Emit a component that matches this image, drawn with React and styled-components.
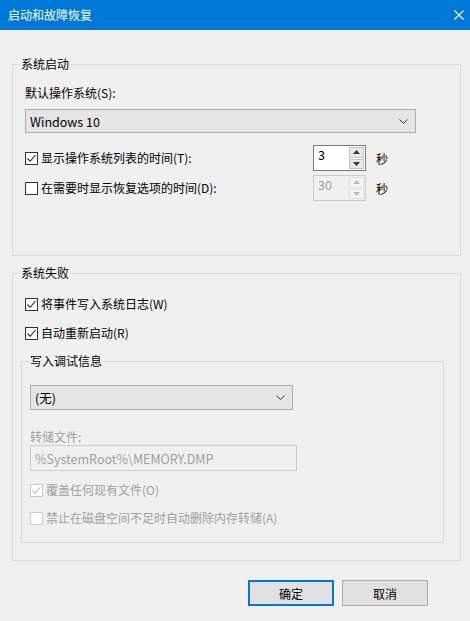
import React from 'react'
import styled, { createGlobalStyle } from 'styled-components'

const GlobalStyle = createGlobalStyle`
  html, body {
    margin: 0;
    padding: 0;
    background: #f0f0f0;
  }
  body {
    font-family: "Noto Sans CJK SC", "Noto Sans", sans-serif;
    font-size: 12px;
    color: #000;
  }
`

function Chevron() {
  return (
    <svg width="9" height="5" viewBox="0 0 9 5">
      <path d="M0.5 0.5 L4.5 4.5 L8.5 0.5" fill="none" stroke="#333" strokeWidth="1" />
    </svg>
  )
}

function CheckMark({ disabled }) {
  return (
    <svg width="11" height="11" viewBox="0 0 11 11">
      <path d="M1.5 5.5 L4.2 8.3 L9.5 2" fill="none" stroke={disabled ? '#bcbcbc' : '#222'} strokeWidth="1.1" />
    </svg>
  )
}

function Check({ label, checked, disabled, offset }) {
  return (
    <CheckRow $offset={offset} $disabled={disabled}>
      <Box $disabled={disabled}>{checked && <CheckMark disabled={disabled} />}</Box>
      <span>{label}</span>
    </CheckRow>
  )
}

function Spinner({ value, disabled }) {
  const arrow = disabled ? '#bdbdbd' : '#333'
  return (
    <Spin $disabled={disabled}>
      <SpinText>{value}</SpinText>
      <SpinButtons>
        <SpinButton $disabled={disabled}>
          <svg width="7" height="4" viewBox="0 0 7 4"><path d="M3.5 0 L7 4 L0 4 Z" fill={arrow} /></svg>
        </SpinButton>
        <SpinButton $disabled={disabled}>
          <svg width="7" height="4" viewBox="0 0 7 4"><path d="M0 0 L7 0 L3.5 4 Z" fill={arrow} /></svg>
        </SpinButton>
      </SpinButtons>
    </Spin>
  )
}

export default function App() {
  return (
    <Window>
      <GlobalStyle />
      <TitleBar>
        <span>启动和故障恢复</span>
        <svg width="10" height="10" viewBox="0 0 10 10">
          <path d="M0.5 0.5 L9.5 9.5 M9.5 0.5 L0.5 9.5" stroke="#fff" strokeWidth="1.1" />
        </svg>
      </TitleBar>
      <Body>
        <Group $top={26}>
          <Legend>系统启动</Legend>
          <StartupContent>
            <Label>默认操作系统(S):</Label>
            <Combo $width={391} $height={24} $top={8}>
              <span>Windows 10</span>
              <Chevron />
            </Combo>
            <TimeRow $top={12}>
              <Check label="显示操作系统列表的时间(T):" checked />
              <Spinner value="3" />
              <Unit>秒</Unit>
            </TimeRow>
            <TimeRow $top={4}>
              <Check label="在需要时显示恢复选项的时间(D):" />
              <Spinner value="30" disabled />
              <Unit>秒</Unit>
            </TimeRow>
          </StartupContent>
        </Group>

        <Group $top={9}>
          <Legend>系统失败</Legend>
          <CheckList>
            <Check label="将事件写入系统日志(W)" checked offset={15} />
            <Check label="自动重新启动(R)" checked offset={13} />
          </CheckList>
          <InnerGroup>
            <Legend>写入调试信息</Legend>
            <DebugContent>
              <Combo $width={263} $height={25}>
                <span>(无)</span>
                <Chevron />
              </Combo>
              <GreyLabel>转储文件:</GreyLabel>
              <TextBox>%SystemRoot%\MEMORY.DMP</TextBox>
              <Check label="覆盖任何现有文件(O)" checked disabled offset={11} />
              <Check label="禁止在磁盘空间不足时自动删除内存转储(A)" disabled offset={12} />
            </DebugContent>
          </InnerGroup>
        </Group>

        <Buttons>
          <Button $primary>确定</Button>
          <Button>取消</Button>
        </Buttons>
      </Body>
    </Window>
  )
}

//styled-components
const Window = styled.div`
  width: 470px;
  height: 621px;
  background: #f0f0f0;
  overflow: hidden;
`

const TitleBar = styled.div`
  height: 30px;
  background: #0078d7;
  color: #fff;
  display: flex;
  align-items: center;
  justify-content: space-between;
  padding: 0 6px 0 8px;
  box-sizing: border-box;
  line-height: 16px;
`

const Body = styled.div`
  padding: 0 9px 0 12px;
`

const Group = styled.fieldset`
  margin: ${p => p.$top}px 0 0 0;
  padding: 0;
  border: 1px solid #dcdcdc;
  min-width: 0;
`

const InnerGroup = styled(Group)`
  margin: 12px 16px 17px 8px;
`

const Legend = styled.legend`
  margin-left: 7px;
  padding: 0 1px;
  line-height: 16px;
  height: 16px;
`

const StartupContent = styled.div`
  padding: 13px 72px 54px 12px;
  display: flex;
  flex-direction: column;
`

const CheckList = styled.div`
  padding-left: 12px;
  display: flex;
  flex-direction: column;
`

const DebugContent = styled.div`
  padding: 16px 8px 16px 8px;
  display: flex;
  flex-direction: column;
`

const Label = styled.div`
  line-height: 16px;
`

const GreyLabel = styled.div`
  line-height: 16px;
  margin-top: 19px;
  color: #a0a0a0;
`

const Combo = styled.div`
  margin-top: ${p => p.$top || 0}px;
  width: ${p => p.$width}px;
  height: ${p => p.$height}px;
  box-sizing: border-box;
  border: 1px solid #adadad;
  background: #e5e5e5;
  display: flex;
  align-items: center;
  justify-content: space-between;
  padding: 0 7px 0 4px;
  font-size: 12.5px;
`

const TimeRow = styled.div`
  margin-top: ${p => p.$top}px;
  display: flex;
  align-items: center;
`

const CheckRow = styled.label`
  display: flex;
  align-items: center;
  gap: 3px;
  margin-top: ${p => p.$offset || 0}px;
  line-height: 16px;
  color: ${p => (p.$disabled ? '#a0a0a0' : '#000')};
  flex: 1;
`

const Box = styled.span`
  width: 13px;
  height: 13px;
  box-sizing: border-box;
  border: 1px solid ${p => (p.$disabled ? '#cccccc' : '#333333')};
  background: #fff;
  display: flex;
  align-items: center;
  justify-content: center;
  flex-shrink: 0;
`

const Spin = styled.div`
  width: 53px;
  height: 26px;
  box-sizing: border-box;
  border: 1px solid ${p => (p.$disabled ? '#cccccc' : '#7a7a7a')};
  background: ${p => (p.$disabled ? '#f0f0f0' : '#fff')};
  color: ${p => (p.$disabled ? '#a0a0a0' : '#000')};
  display: flex;
  align-items: stretch;
  padding: 1px;
`

const SpinText = styled.div`
  flex: 1;
  padding-left: 3px;
  line-height: 16px;
  font-size: 12.5px;
`

const SpinButtons = styled.div`
  width: 15px;
  display: flex;
  flex-direction: column;
  gap: 1px;
`

const SpinButton = styled.div`
  flex: 1;
  border: 1px solid ${p => (p.$disabled ? '#e0e0e0' : '#c4c4c4')};
  background: ${p => (p.$disabled ? '#f4f4f4' : '#e8e8e8')};
  display: flex;
  align-items: center;
  justify-content: center;
`

const Unit = styled.span`
  margin-left: 10px;
  width: 12px;
`

const TextBox = styled.div`
  width: 267px;
  height: 26px;
  box-sizing: border-box;
  border: 1px solid #cccccc;
  background: #f0f0f0;
  color: #a0a0a0;
  display: flex;
  align-items: center;
  padding-left: 4px;
  font-size: 12.5px;
`

const Buttons = styled.div`
  display: flex;
  justify-content: flex-end;
  gap: 8px;
  margin: 19px 33px 0 0;
`

const Button = styled.div`
  width: 86px;
  height: 26px;
  box-sizing: border-box;
  border: ${p => (p.$primary ? '2px solid #0078d7' : '1px solid #adadad')};
  background: #e1e1e1;
  display: flex;
  align-items: center;
  justify-content: center;
`
